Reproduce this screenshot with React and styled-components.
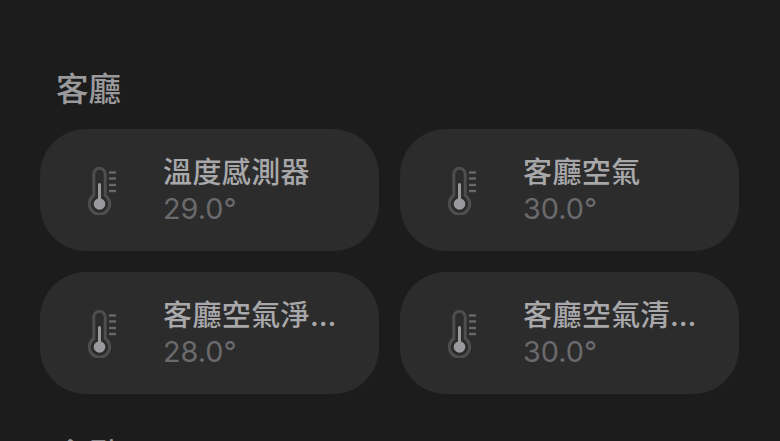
import React from "react";
import styled, { createGlobalStyle } from "styled-components";

const GlobalStyle = createGlobalStyle`
  html, body {
    margin: 0;
    height: 441px;
    overflow: hidden;
    background: #1c1c1d;
  }
  body {
    font-family: Inter, "Noto Sans CJK TC", sans-serif;
  }
`;

const rooms = [
  {
    name: "客廳",
    sensors: [
      { name: "溫度感測器", value: "29.0°" },
      { name: "客廳空氣", value: "30.0°" },
      { name: "客廳空氣淨化器溫度", value: "28.0°" },
      { name: "客廳空氣清淨機溫度", value: "30.0°" },
    ],
  },
  { name: "主臥", sensors: [] },
];

const ThermometerIcon = () => (
  <svg width="32" height="50" viewBox="0 0 32 50" fill="none">
    <path
      d="M6.8 9a5.7 5.7 0 0 1 11.4 0v21.5a10.2 10.2 0 1 1-11.4 0z"
      stroke="#4e4e4f"
      strokeWidth="3"
    />
    <rect x="11" y="18" width="3" height="20" rx="1.5" fill="#9a9a9c" />
    <circle cx="12.5" cy="39" r="5.8" fill="#9a9a9c" />
    <g stroke="#68686a" strokeWidth="2.4">
      <path d="M22 7.5h7" />
      <path d="M22 13.5h7" />
      <path d="M22 20h7" />
      <path d="M22 26h7" />
    </g>
  </svg>
);

export default function App() {
  return (
    <>
      <GlobalStyle />
      <Page>
        {rooms.map(room => (
          <Section key={room.name}>
            <RoomTitle>{room.name}</RoomTitle>
            <Grid>
              {room.sensors.map(sensor => (
                <Card key={sensor.name}>
                  <IconSlot>
                    <ThermometerIcon />
                  </IconSlot>
                  <Info>
                    <SensorName>{sensor.name}</SensorName>
                    <SensorValue>{sensor.value}</SensorValue>
                  </Info>
                </Card>
              ))}
            </Grid>
          </Section>
        ))}
      </Page>
    </>
  );
}

const Page = styled.div`
  padding: 68px 41px 0 40px;
  display: flex;
  flex-direction: column;
  gap: 40px;
`;

const Section = styled.section`
  display: flex;
  flex-direction: column;
  gap: 17px;
`;

const RoomTitle = styled.h2`
  margin: 0 0 0 16px;
  font-size: 32.5px;
  line-height: 44px;
  font-weight: 500;
  color: #9a9a9c;
`;

const Grid = styled.div`
  display: grid;
  grid-template-columns: 339px 339px;
  column-gap: 21px;
  row-gap: 21px;
`;

const Card = styled.div`
  height: 122px;
  border-radius: 46px;
  background: #2c2c2d;
  display: flex;
  align-items: center;
  padding: 0 38px 0 47px;
  box-sizing: border-box;
`;

const IconSlot = styled.div`
  flex: none;
  width: 32px;
  height: 50px;
  margin-right: 44px;
`;

const Info = styled.div`
  min-width: 0;
  flex: 1;
  display: flex;
  flex-direction: column;
`;

const SensorName = styled.div`
  font-size: 29px;
  line-height: 38px;
  font-weight: 500;
  letter-spacing: 0.4px;
  color: #a8a8aa;
  white-space: nowrap;
  overflow: hidden;
  text-overflow: ellipsis;
`;

const SensorValue = styled.div`
  font-size: 28.8px;
  line-height: 34px;
  font-weight: 400;
  color: #6a6a6c;
`;
